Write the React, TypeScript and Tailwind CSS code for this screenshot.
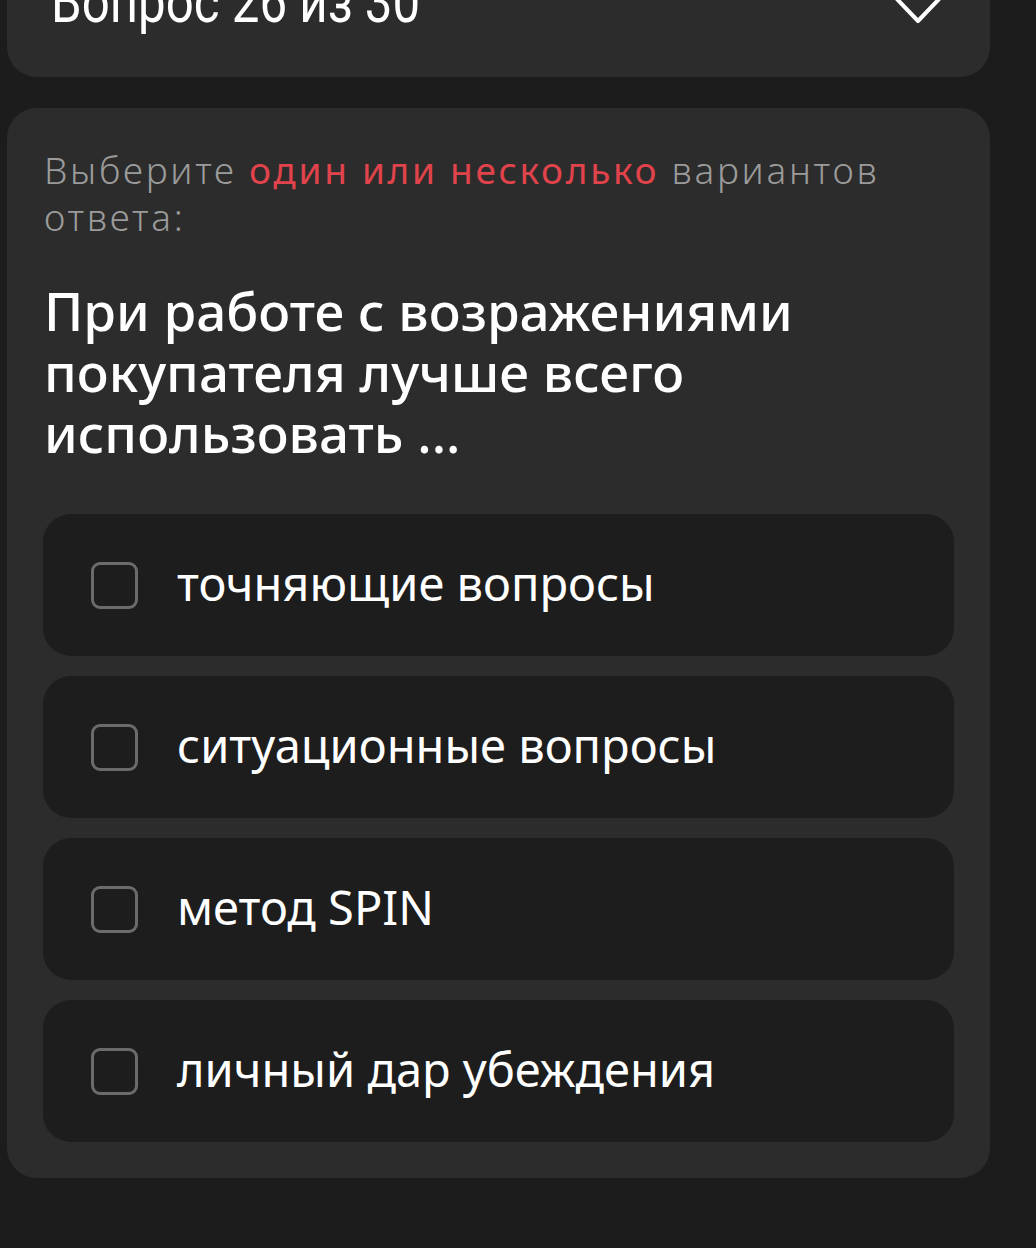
import React from "react";

const options = [
  "точняющие вопросы",
  "ситуационные вопросы",
  "метод SPIN",
  "личный дар убеждения",
];

export default function App() {
  return (
    <div className="min-h-[1248px] w-[1036px] bg-[#1c1c1c] overflow-hidden" style={{ fontFamily: '"Noto Sans", "Open Sans", sans-serif' }}>
      <div className="-mt-[40px] ml-[7px] w-[983px] h-[117px] rounded-b-[30px] bg-[#2c2c2c] flex items-start justify-between pl-[44px] pr-[46px]">
        <div className="origin-left scale-x-[0.82] text-white text-[60px] leading-[60px] whitespace-nowrap pt-[12px]" style={{ fontFamily: 'Roboto, "Liberation Sans", sans-serif' }}>
          Вопрос 26 из 30
        </div>
        <svg width="52" height="30" viewBox="0 0 52 30" className="mt-[34px]" fill="none" stroke="white" strokeWidth="4" strokeLinecap="round" strokeLinejoin="round">
          <path d="M3 3 L26 27 L49 3" />
        </svg>
      </div>
      <div className="mt-[31px] ml-[7px] w-[983px] rounded-[30px] bg-[#2c2c2c] pt-[38px] pb-[36px] pl-[36px] pr-[36px]">
        <div className="pl-[1px] text-[37px] leading-[47px] tracking-[2.7px] text-[#9b9b9b] font-light">
          Выберите <span className="text-[#e0434b] font-normal">один или несколько</span> вариантов
          <br />
          ответа:
        </div>
        <div className="mt-[40px] pl-[1px] text-[53px] leading-[61px] text-white font-medium">
          При работе с возражениями покупателя лучше всего использовать ...
        </div>
        <div className="mt-[51px] flex flex-col gap-[20px]">
          {options.map((o) => (
            <div key={o} className="h-[142px] rounded-[28px] bg-[#1d1d1d] flex items-center pl-[48px]">
              <div className="w-[47px] h-[47px] rounded-[9px] border-[3px] border-[#6b6b6b] shrink-0" />
              <div className="ml-[39px] text-[47px] text-white leading-none pb-[4px]">{o}</div>
            </div>
          ))}
        </div>
      </div>
    </div>
  );
}
